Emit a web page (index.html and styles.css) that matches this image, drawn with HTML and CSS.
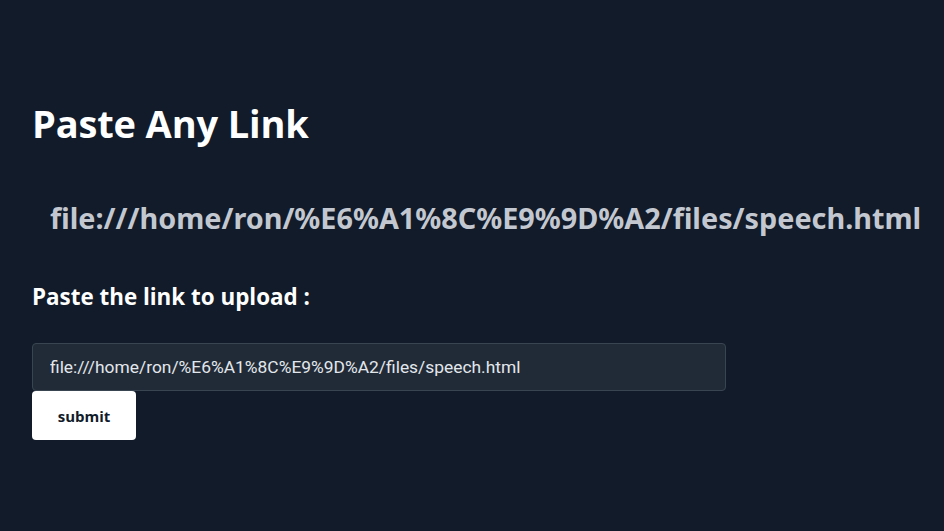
FILE: index.html
```html
<!DOCTYPE html>
<html lang="en">
<head>
<meta charset="utf-8">
<title>Paste Any Link</title>
<link rel="stylesheet" href="styles.css">
</head>
<body>
<main class="page">
  <h1 class="title">Paste Any Link</h1>
  <h2 class="link">file:///home/ron/%E6%A1%8C%E9%9D%A2/files/speech.html</h2>
  <form class="upload">
    <label class="label" for="url">Paste the link to upload :</label>
    <input class="field" id="url" type="text" value="file:///home/ron/%E6%A1%8C%E9%9D%A2/files/speech.html">
    <button class="submit" type="button">submit</button>
  </form>
</main>
</body>
</html>
```

FILE: styles.css
```css
html, body {
  margin: 0;
  padding: 0;
  background: #111b2a;
  height: 100%;
}
.page {
  padding: 98px 32px 0 32px;
  font-family: "Open Sans", "Noto Sans", sans-serif;
}
.title {
  margin: 0;
  color: #ffffff;
  font-size: 38px;
  font-weight: 700;
  line-height: 50px;
  letter-spacing: -0.15px;
}
.link {
  margin: 50px 0 0 18px;
  color: #c3c8d0;
  font-family: "Noto Sans", sans-serif;
  font-size: 28.8px;
  font-weight: 700;
  line-height: 40px;
}
.upload {
  display: flex;
  flex-direction: column;
  align-items: flex-start;
  margin-top: 44px;
}
.label {
  color: #ffffff;
  font-size: 22.4px;
  font-weight: 700;
  line-height: 30px;
  margin-bottom: 31px;
}
.field {
  box-sizing: border-box;
  width: 694px;
  height: 48px;
  padding: 0 17px;
  background: #212b37;
  border: 1px solid #3a4552;
  border-radius: 4px;
  color: #e3e7ec;
  font-family: Roboto, sans-serif;
  font-size: 17.4px;
  outline: none;
}
.submit {
  box-sizing: border-box;
  width: 104px;
  height: 49px;
  padding-top: 2px;
  background: #ffffff;
  border: none;
  border-radius: 4px;
  color: #111b2a;
  font-family: "Open Sans", sans-serif;
  font-size: 15px;
  font-weight: 700;
}
```
